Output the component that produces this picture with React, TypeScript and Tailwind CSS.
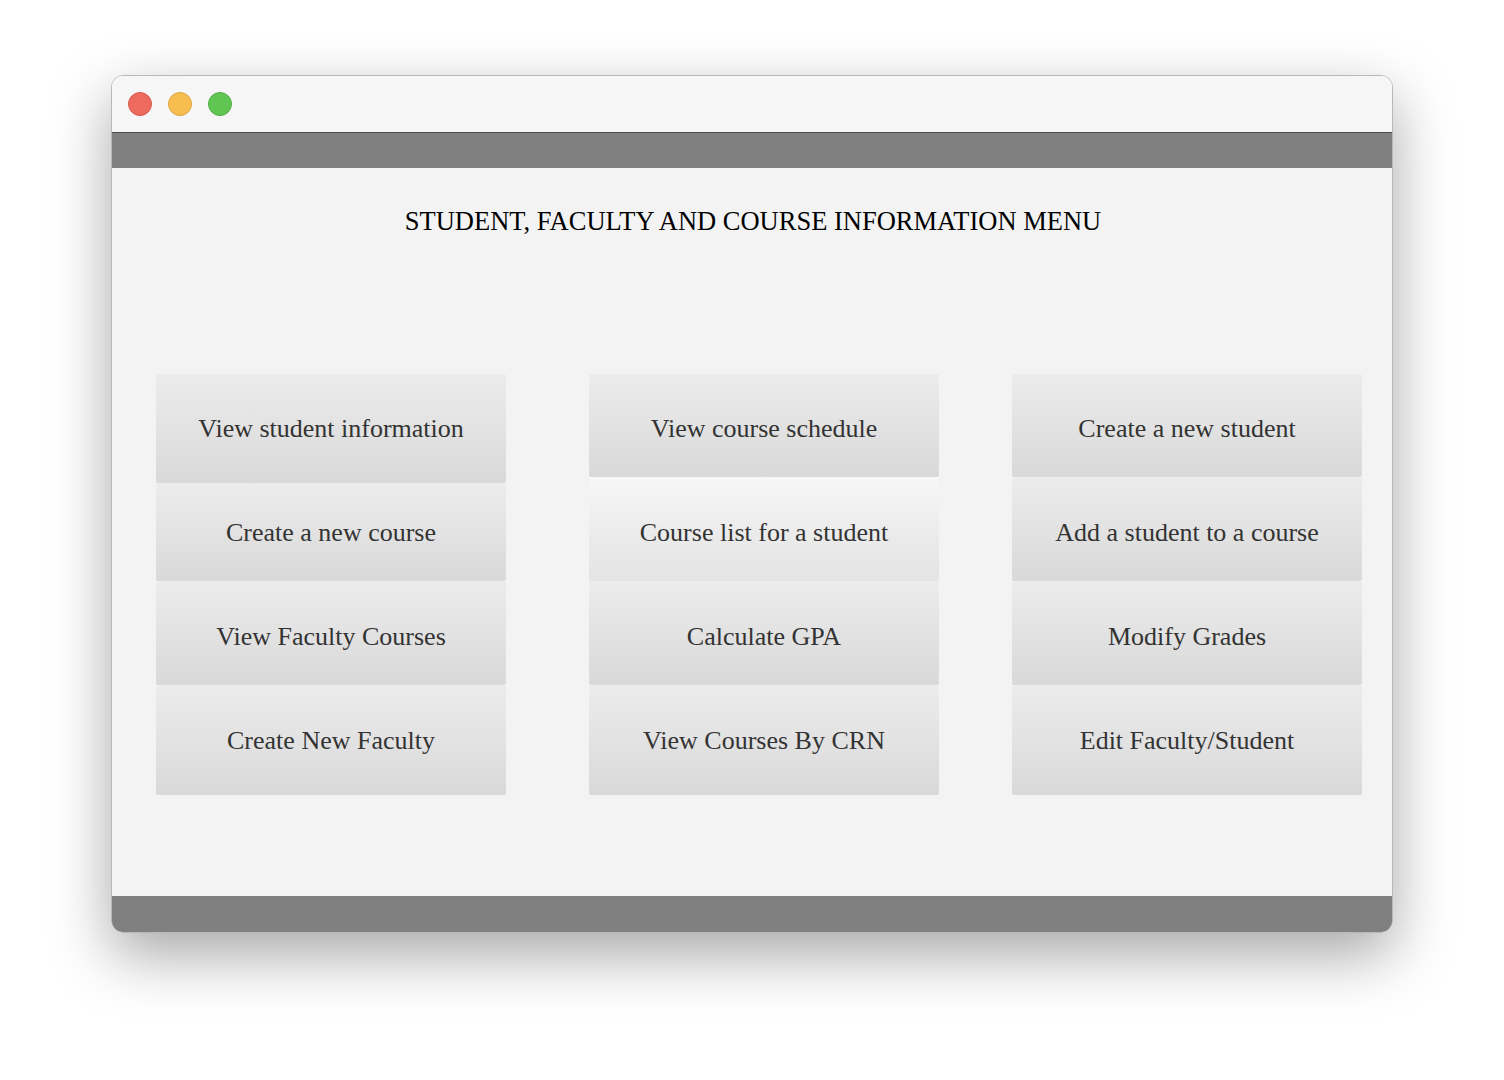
const columns = [
  {
    gap: '',
    items: [
      { label: 'View student information', h: 'h-[109px]', pad: '' },
      { label: 'Create a new course', h: 'h-[98px]', pad: '' },
      { label: 'View Faculty Courses', h: 'h-[104px]', pad: 'pt-[6px]' },
      { label: 'Create New Faculty', h: 'h-[110px]', pad: '' },
    ],
  },
  {
    gap: 'ml-[83px]',
    items: [
      { label: 'View course schedule', h: 'h-[103px]', pad: 'pt-[6px]' },
      { label: 'Course list for a student', h: 'h-[104px]', pad: 'pt-[6px]', hot: true },
      { label: 'Calculate GPA', h: 'h-[104px]', pad: 'pt-[6px]' },
      { label: 'View Courses By CRN', h: 'h-[110px]', pad: '' },
    ],
  },
  {
    gap: 'ml-[73px]',
    items: [
      { label: 'Create a new student', h: 'h-[103px]', pad: 'pt-[6px]' },
      { label: 'Add a student to a course', h: 'h-[104px]', pad: 'pt-[6px]' },
      { label: 'Modify Grades', h: 'h-[104px]', pad: 'pt-[6px]' },
      { label: 'Edit Faculty/Student', h: 'h-[110px]', pad: '' },
    ],
  },
];

function MenuButton({ label, h, pad, hot }: { label: string; h: string; pad: string; hot?: boolean }) {
  return (
    <button
      className={`${h} ${pad} w-full rounded-[2px] flex items-center justify-center text-[26px] text-[#333333] ${
        hot
          ? 'bg-gradient-to-b from-[#f7f7f7] via-[#ececec] to-[#e4e4e4]'
          : 'bg-gradient-to-b from-[#ececec] to-[#d9d9d9]'
      }`}
    >
      {label}
    </button>
  );
}

export default function App() {
  return (
    <div
      className="w-[1504px] h-[1080px] bg-white pt-[75px] pl-[111px]"
      style={{ fontFamily: '"Liberation Serif", "Times New Roman", serif' }}
    >
      <div className="w-[1282px] h-[858px] rounded-[12px] border border-[#b8b8b8] overflow-hidden flex flex-col shadow-[0_22px_60px_rgba(0,0,0,0.35)]">
        {/* Title bar */}
        <div className="h-[57px] bg-[#f6f6f6] flex items-center gap-4 pl-[16px] border-b border-[#4a4a4a]">
          <span className="w-6 h-6 rounded-full bg-[#ee6a5f] border border-[#d8574c]" />
          <span className="w-6 h-6 rounded-full bg-[#f5be4f] border border-[#dea43b]" />
          <span className="w-6 h-6 rounded-full bg-[#61c554] border border-[#4fae43]" />
        </div>
        <div className="h-[35px] bg-[#808080]" />

        {/* Content */}
        <div className="flex-1 bg-[#f3f3f3] flex flex-col">
          <h1 className="text-center text-[26.5px] text-black pt-[38px] leading-[30px] pl-[2px]">
            STUDENT, FACULTY AND COURSE INFORMATION MENU
          </h1>
          <div className="flex pl-[44px] mt-[138px]">
            {columns.map((col, i) => (
              <div key={i} className={`w-[350px] ${col.gap} flex flex-col`}>
                {col.items.map((it) => (
                  <MenuButton key={it.label} {...it} />
                ))}
              </div>
            ))}
          </div>
        </div>

        <div className="h-[36px] bg-[#808080]" />
      </div>
    </div>
  );
}
